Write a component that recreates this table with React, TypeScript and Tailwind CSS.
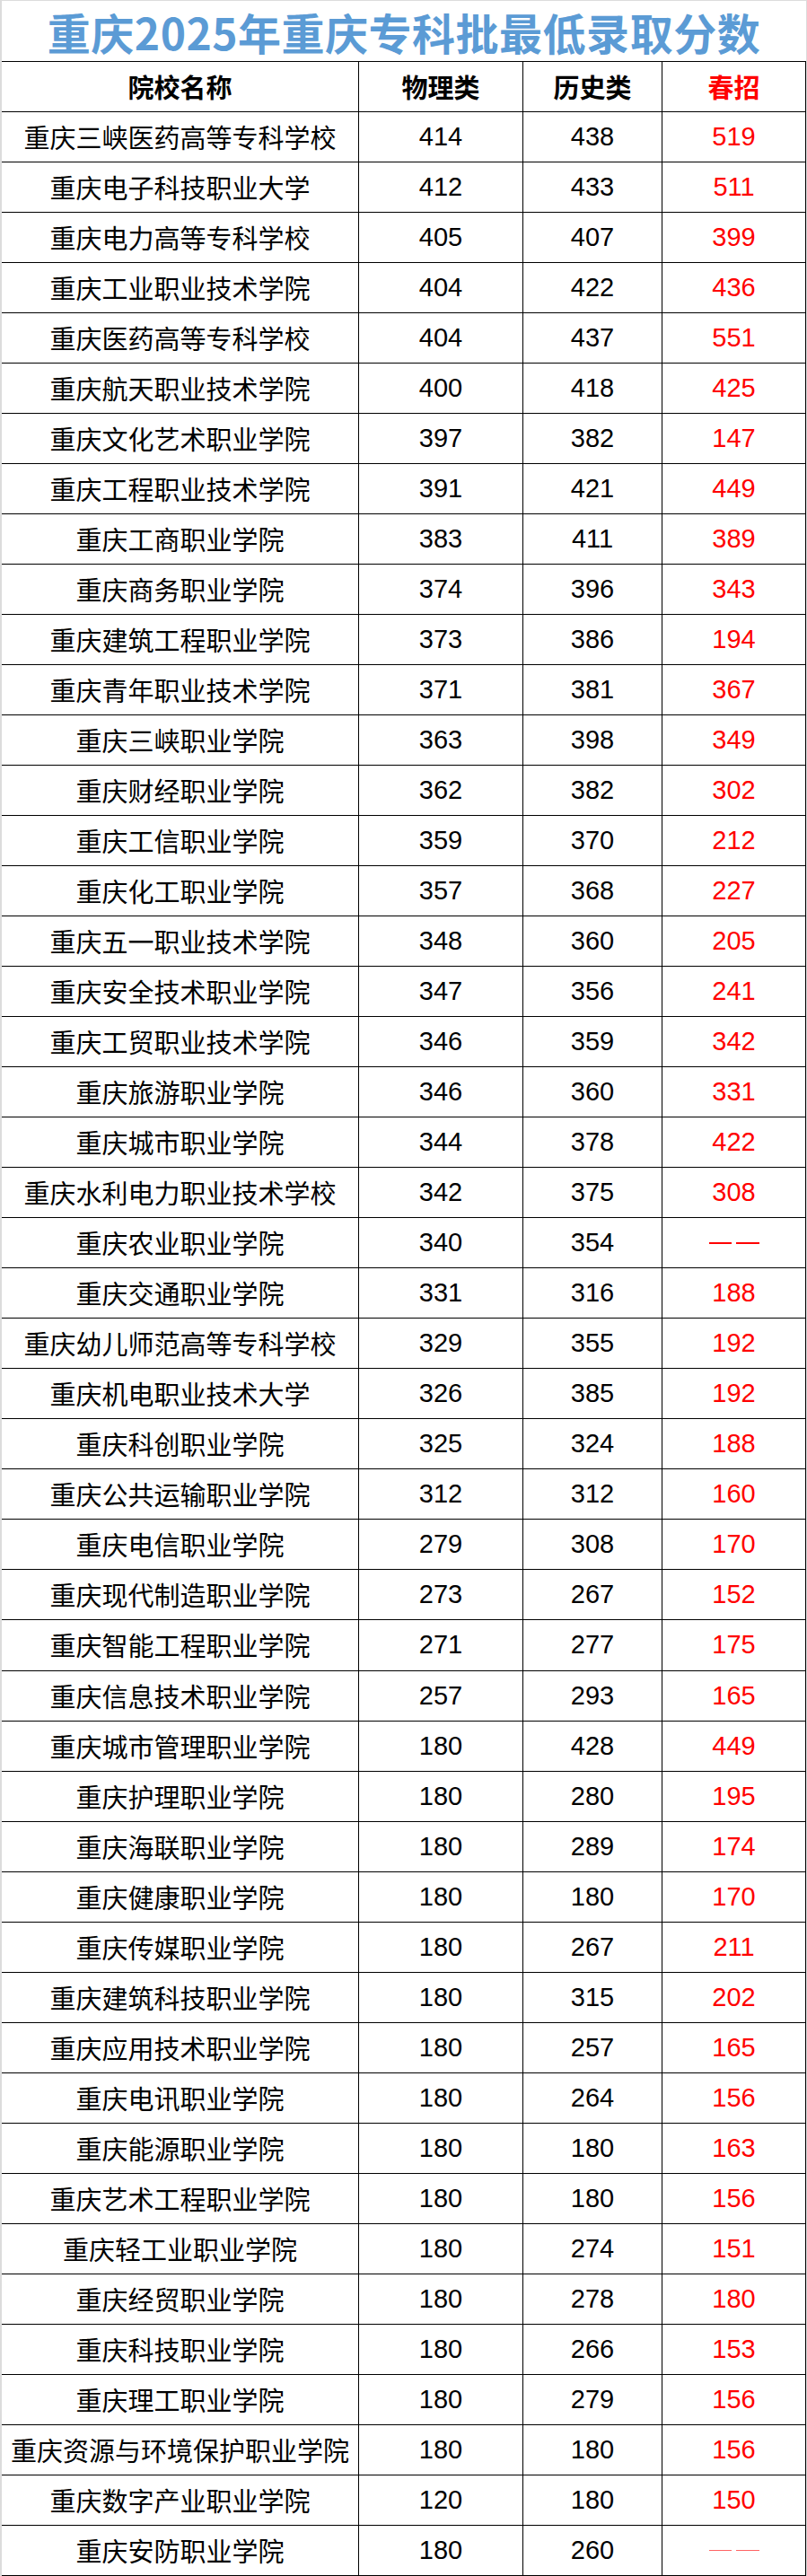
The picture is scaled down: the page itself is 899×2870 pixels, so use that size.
const rows: [string, string, string, string][] = [
  ["重庆三峡医药高等专科学校", "414", "438", "519"],
  ["重庆电子科技职业大学", "412", "433", "511"],
  ["重庆电力高等专科学校", "405", "407", "399"],
  ["重庆工业职业技术学院", "404", "422", "436"],
  ["重庆医药高等专科学校", "404", "437", "551"],
  ["重庆航天职业技术学院", "400", "418", "425"],
  ["重庆文化艺术职业学院", "397", "382", "147"],
  ["重庆工程职业技术学院", "391", "421", "449"],
  ["重庆工商职业学院", "383", "411", "389"],
  ["重庆商务职业学院", "374", "396", "343"],
  ["重庆建筑工程职业学院", "373", "386", "194"],
  ["重庆青年职业技术学院", "371", "381", "367"],
  ["重庆三峡职业学院", "363", "398", "349"],
  ["重庆财经职业学院", "362", "382", "302"],
  ["重庆工信职业学院", "359", "370", "212"],
  ["重庆化工职业学院", "357", "368", "227"],
  ["重庆五一职业技术学院", "348", "360", "205"],
  ["重庆安全技术职业学院", "347", "356", "241"],
  ["重庆工贸职业技术学院", "346", "359", "342"],
  ["重庆旅游职业学院", "346", "360", "331"],
  ["重庆城市职业学院", "344", "378", "422"],
  ["重庆水利电力职业技术学校", "342", "375", "308"],
  ["重庆农业职业学院", "340", "354", "——"],
  ["重庆交通职业学院", "331", "316", "188"],
  ["重庆幼儿师范高等专科学校", "329", "355", "192"],
  ["重庆机电职业技术大学", "326", "385", "192"],
  ["重庆科创职业学院", "325", "324", "188"],
  ["重庆公共运输职业学院", "312", "312", "160"],
  ["重庆电信职业学院", "279", "308", "170"],
  ["重庆现代制造职业学院", "273", "267", "152"],
  ["重庆智能工程职业学院", "271", "277", "175"],
  ["重庆信息技术职业学院", "257", "293", "165"],
  ["重庆城市管理职业学院", "180", "428", "449"],
  ["重庆护理职业学院", "180", "280", "195"],
  ["重庆海联职业学院", "180", "289", "174"],
  ["重庆健康职业学院", "180", "180", "170"],
  ["重庆传媒职业学院", "180", "267", "211"],
  ["重庆建筑科技职业学院", "180", "315", "202"],
  ["重庆应用技术职业学院", "180", "257", "165"],
  ["重庆电讯职业学院", "180", "264", "156"],
  ["重庆能源职业学院", "180", "180", "163"],
  ["重庆艺术工程职业学院", "180", "180", "156"],
  ["重庆轻工业职业学院", "180", "274", "151"],
  ["重庆经贸职业学院", "180", "278", "180"],
  ["重庆科技职业学院", "180", "266", "153"],
  ["重庆理工职业学院", "180", "279", "156"],
  ["重庆资源与环境保护职业学院", "180", "180", "156"],
  ["重庆数字产业职业学院", "120", "180", "150"],
  ["重庆安防职业学院", "180", "260", "——"],
];

const cell = "flex items-center justify-center border-r border-black";

// the empty spring-intake mark: two short red strokes, the last one drawn fainter
function Dash({ faint }: { faint: boolean }) {
  return (
    <span className={`flex gap-[5px] ${faint ? "opacity-60" : ""}`} aria-label="——">
      <span className={`w-[25px] bg-[#ff0000] ${faint ? "h-px" : "h-[2px]"}`} />
      <span className={`w-[26px] bg-[#ff0000] ${faint ? "h-px" : "h-[2px]"}`} />
    </span>
  );
}

export default function App() {
  return (
    <div className="w-[899px] h-[2870px] bg-white flex flex-col border-t border-l-2 border-r border-[#dcdcdc] font-['Liberation_Sans','Noto_Sans_CJK_SC',sans-serif] text-black leading-none">
      <div className="h-[67px] shrink-0 flex items-center justify-center">
        <h1 className="font-['Noto_Sans_CJK_SC',sans-serif] font-bold text-[48px] tracking-[0.5px] text-[#5b9bd5] leading-none">
          重庆2025年重庆专科批最低录取分数
        </h1>
      </div>

      <div className="flex-1 flex flex-col border-t border-black">
        <div className="flex-1 grid grid-cols-[398px_183px_155px_1fr] border-b border-black font-['Noto_Sans_CJK_SC',sans-serif] font-bold text-[29px]">
          <div className={cell}>院校名称</div>
          <div className={cell}>物理类</div>
          <div className={cell}>历史类</div>
          <div className={`${cell} text-[#ff0000]`}>春招</div>
        </div>

        {rows.map(([name, wuli, lishi, chun], i) => (
          <div key={i} className="flex-1 grid grid-cols-[398px_183px_155px_1fr] border-b border-black text-[29px]">
            <div className={`${cell} font-['Noto_Sans_CJK_SC',sans-serif]`}>{name}</div>
            <div className={cell}>{wuli}</div>
            <div className={cell}>{lishi}</div>
            <div className={`${cell} text-[#ff0000]`}>
              {chun === "——" ? <Dash faint={i === rows.length - 1} /> : chun}
            </div>
          </div>
        ))}
      </div>
    </div>
  );
}
